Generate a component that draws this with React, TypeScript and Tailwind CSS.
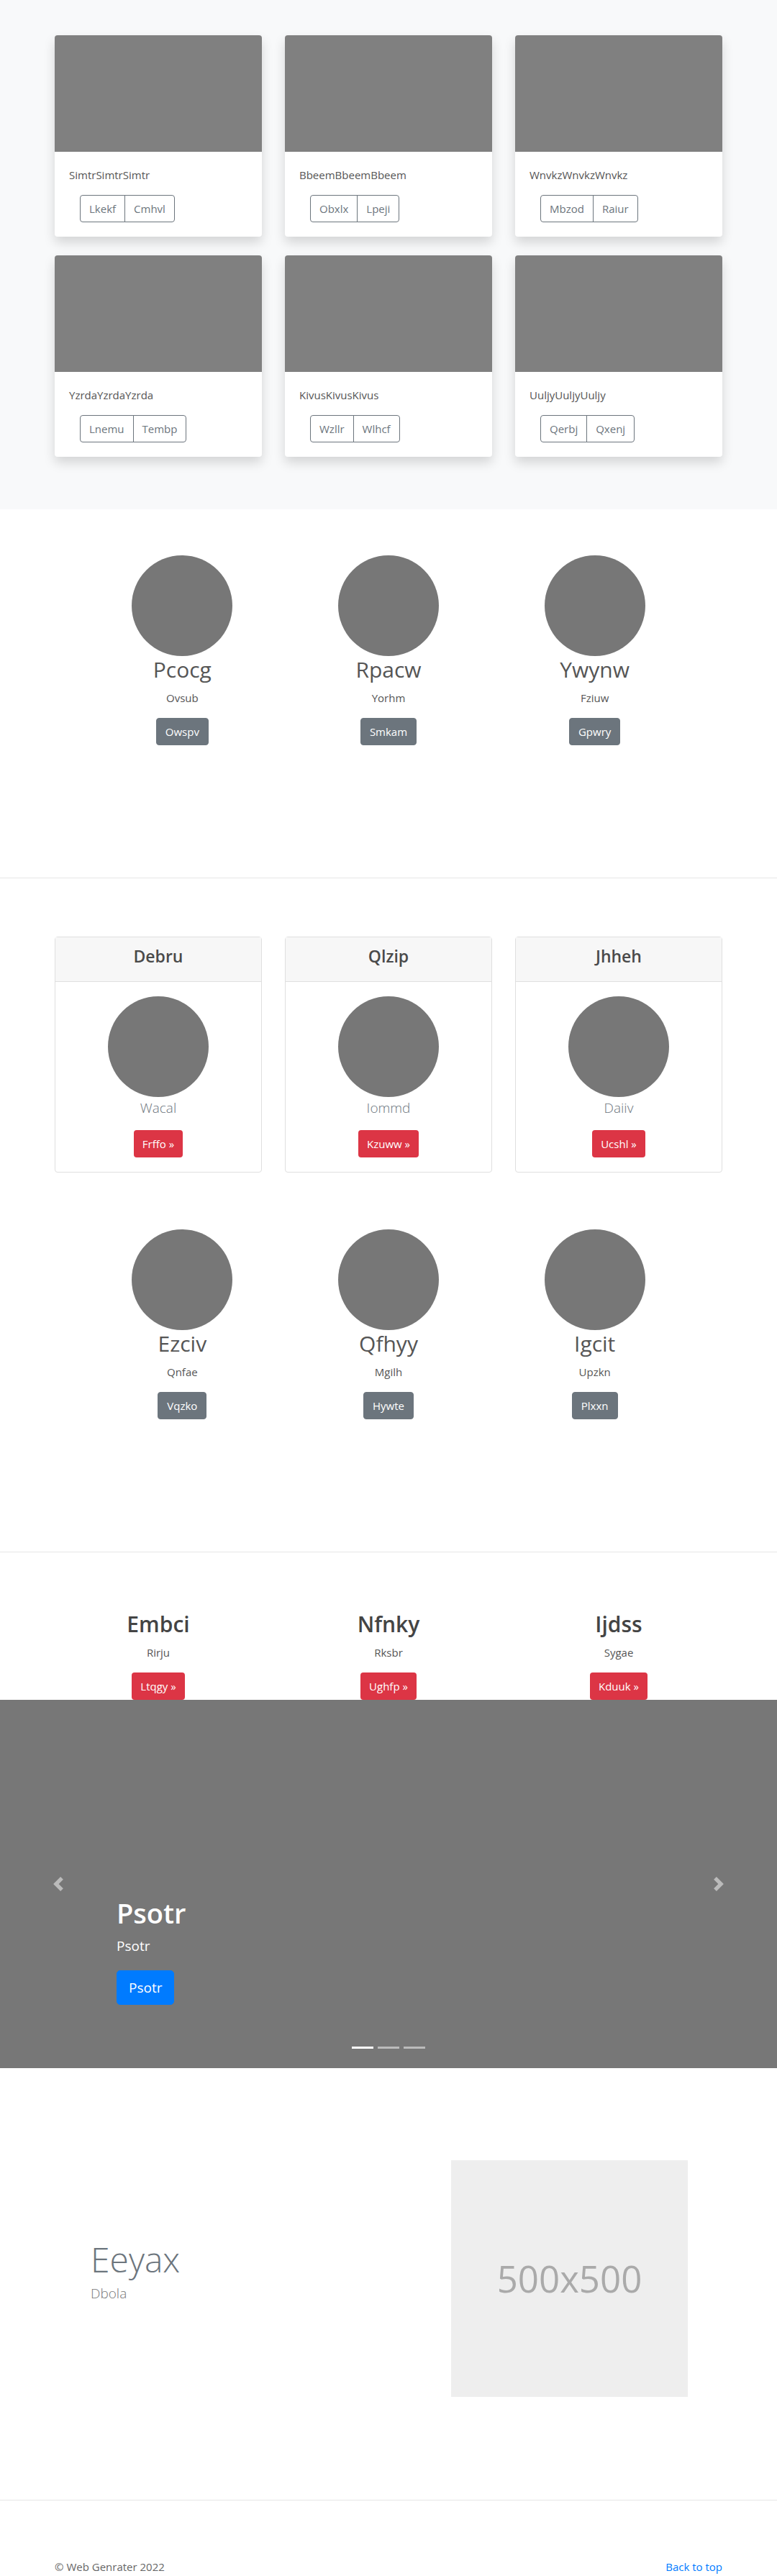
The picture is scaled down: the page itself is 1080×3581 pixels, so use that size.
const albumCards = [
  { title: "SimtrSimtrSimtr", btns: ["Lkekf", "Cmhvl"] },
  { title: "BbeemBbeemBbeem", btns: ["Obxlx", "Lpeji"] },
  { title: "WnvkzWnvkzWnvkz", btns: ["Mbzod", "Raiur"] },
  { title: "YzrdaYzrdaYzrda", btns: ["Lnemu", "Tembp"] },
  { title: "KivusKivusKivus", btns: ["Wzllr", "Wlhcf"] },
  { title: "UuljyUuljyUuljy", btns: ["Qerbj", "Qxenj"] },
];

const team1 = [
  ["Pcocg", "Ovsub", "Owspv"],
  ["Rpacw", "Yorhm", "Smkam"],
  ["Ywynw", "Fziuw", "Gpwry"],
];

const pricing = [
  ["Debru", "Wacal", "Frffo"],
  ["Qlzip", "Iommd", "Kzuww"],
  ["Jhheh", "Daiiv", "Ucshl"],
];

const team2 = [
  ["Ezciv", "Qnfae", "Vqzko"],
  ["Qfhyy", "Mgilh", "Hywte"],
  ["Igcit", "Upzkn", "Plxxn"],
];

const features = [
  ["Embci", "Rirju", "Ltqgy"],
  ["Nfnky", "Rksbr", "Ughfp"],
  ["Ijdss", "Sygae", "Kduuk"],
];

function Divider() {
  return <div className="border-t border-[#e6e6e6]" />;
}

function TeamRow({ items }: { items: string[][] }) {
  return (
    <div className="mx-auto grid w-[860px] grid-cols-3">
      {items.map(([name, role, btn]) => (
        <div key={name} className="flex flex-col items-center text-center">
          <div className="h-[140px] w-[140px] rounded-full bg-[#777]" />
          <h2 className="mb-2 text-[30px] leading-[38px] text-[#555]">{name}</h2>
          <p className="mb-4 text-[15px] leading-6 text-[#555]">{role}</p>
          <a className="rounded-[4px] border border-[#6c757d] bg-[#6c757d] px-3 py-1.5 text-[15px] leading-6 text-white">
            {btn}
          </a>
        </div>
      ))}
    </div>
  );
}

export default function App() {
  return (
    <div className="min-h-screen bg-white font-['Open_Sans','Liberation_Sans',sans-serif]">
      {/* album */}
      <section className="bg-[#f8f9fa] pt-[49px] pb-[73px]">
        <div className="mx-auto grid w-[928px] grid-cols-3 gap-x-8 gap-y-[26px]">
          {albumCards.map((c) => (
            <div key={c.title} className="overflow-hidden rounded-[4px] bg-white shadow-[0_8px_16px_rgba(0,0,0,0.15)]">
              <div className="h-[162px] bg-[#808080]" />
              <div className="p-5">
                <p className="mb-4 text-[15px] leading-6 text-[#555]">{c.title}</p>
                <div className="ml-[15px] flex">
                  {c.btns.map((b, i) => (
                    <a
                      key={b}
                      className={
                        "border border-[#6c757d] px-3 py-1.5 text-[15px] leading-6 text-[#6c757d] " +
                        (i === 0 ? "rounded-l-[4px]" : "-ml-px rounded-r-[4px]")
                      }
                    >
                      {b}
                    </a>
                  ))}
                </div>
              </div>
            </div>
          ))}
        </div>
      </section>

      {/* team */}
      <section className="pt-16 pb-[184px]">
        <TeamRow items={team1} />
      </section>
      <Divider />

      {/* pricing cards + team */}
      <section className="pt-[81px] pb-[184px]">
        <div className="mx-auto grid w-[928px] grid-cols-3 gap-x-8">
          {pricing.map(([title, lead, btn]) => (
            <div key={title} className="rounded-[4px] border border-[#dfdfdf] bg-white text-center">
              <div className="border-b border-[#dfdfdf] bg-[#f7f7f7] px-5 pt-3 pb-3">
                <h4 className="mb-2 text-[23px] font-semibold leading-[29px] text-[#4a4a4a]">{title}</h4>
              </div>
              <div className="flex flex-col items-center p-5">
                <div className="h-[140px] w-[140px] rounded-full bg-[#777]" />
                <p className="mb-4 text-[19px] font-light leading-[30px] text-[#6c757d]">{lead}</p>
                <a className="rounded-[4px] bg-[#dc3545] px-3 py-[7px] text-[15px] leading-6 text-white">
                  {btn} »
                </a>
              </div>
            </div>
          ))}
        </div>
        <div className="mt-[79px]">
          <TeamRow items={team2} />
        </div>
      </section>
      <Divider />

      {/* headings */}
      <section className="pt-[81px]">
        <div className="mx-auto grid w-[928px] grid-cols-3 gap-x-8">
          {features.map(([h, p, btn]) => (
            <div key={h} className="flex flex-col items-center text-center">
              <h2 className="mb-2 text-[30px] font-semibold leading-[38px] text-[#444]">{h}</h2>
              <p className="mb-4 text-[15px] leading-6 text-[#555]">{p}</p>
              <a className="rounded-[4px] bg-[#dc3545] px-3 py-[7px] text-[15px] leading-6 text-white">
                {btn} »
              </a>
            </div>
          ))}
        </div>
      </section>

      {/* carousel */}
      <section className="relative h-[512px] bg-[#777]">
        <div className="absolute top-0 bottom-0 left-0 flex w-[15%] items-center justify-center">
          <svg width="20" height="20" viewBox="0 0 8 8" fill="#fff" opacity="0.5">
            <path d="M5.25 0l-4 4 4 4 1.5-1.5L4.25 4l2.5-2.5L5.25 0z" />
          </svg>
        </div>
        <div className="absolute top-0 right-0 bottom-0 flex w-[15%] items-center justify-center">
          <svg width="20" height="20" viewBox="0 0 8 8" fill="#fff" opacity="0.5">
            <path d="M2.75 0l-1.5 1.5L3.75 4l-2.5 2.5L2.75 8l4-4-4-4z" />
          </svg>
        </div>
        <div className="absolute right-[162px] bottom-12 left-[162px] py-5 text-left text-white">
          <h1 className="mb-2 text-[38px] font-semibold leading-[48px]">Psotr</h1>
          <p className="mb-5 text-[19px] leading-[28px]">Psotr</p>
          <div className="mb-5">
            <a className="block w-fit rounded-[5px] border border-[#007bff] bg-[#007bff] px-4 py-2 text-[19px] leading-[30px] text-white">
              Psotr
            </a>
          </div>
        </div>
        <div className="absolute right-0 bottom-[27px] left-0 flex justify-center gap-[6px]">
          <span className="h-[3px] w-[30px] bg-white" />
          <span className="h-[3px] w-[30px] bg-white/50" />
          <span className="h-[3px] w-[30px] bg-white/50" />
        </div>
      </section>

      {/* featurette */}
      <section className="pt-[128px] pb-[143px]">
        <div className="mx-auto flex w-[928px] items-center">
          <div className="ml-[50px] flex-1">
            <h2 className="mb-2 text-[48px] font-light leading-none text-[#6c757d]">Eeyax</h2>
            <p className="mb-4 text-[19px] font-light leading-[30px] text-[#777]">Dbola</p>
          </div>
          <div className="mr-[48px] flex h-[329px] w-[329px] items-center justify-center bg-[#eee]">
            <span className="text-[51px] text-[#aaa]">500x500</span>
          </div>
        </div>
      </section>
      <Divider />

      {/* footer */}
      <footer className="mx-auto flex w-[928px] justify-between pt-20 pb-4 text-[15px] leading-6">
        <p className="text-[#666]">© Web Genrater 2022</p>
        <a className="text-[#007bff]">Back to top</a>
      </footer>
    </div>
  );
}
